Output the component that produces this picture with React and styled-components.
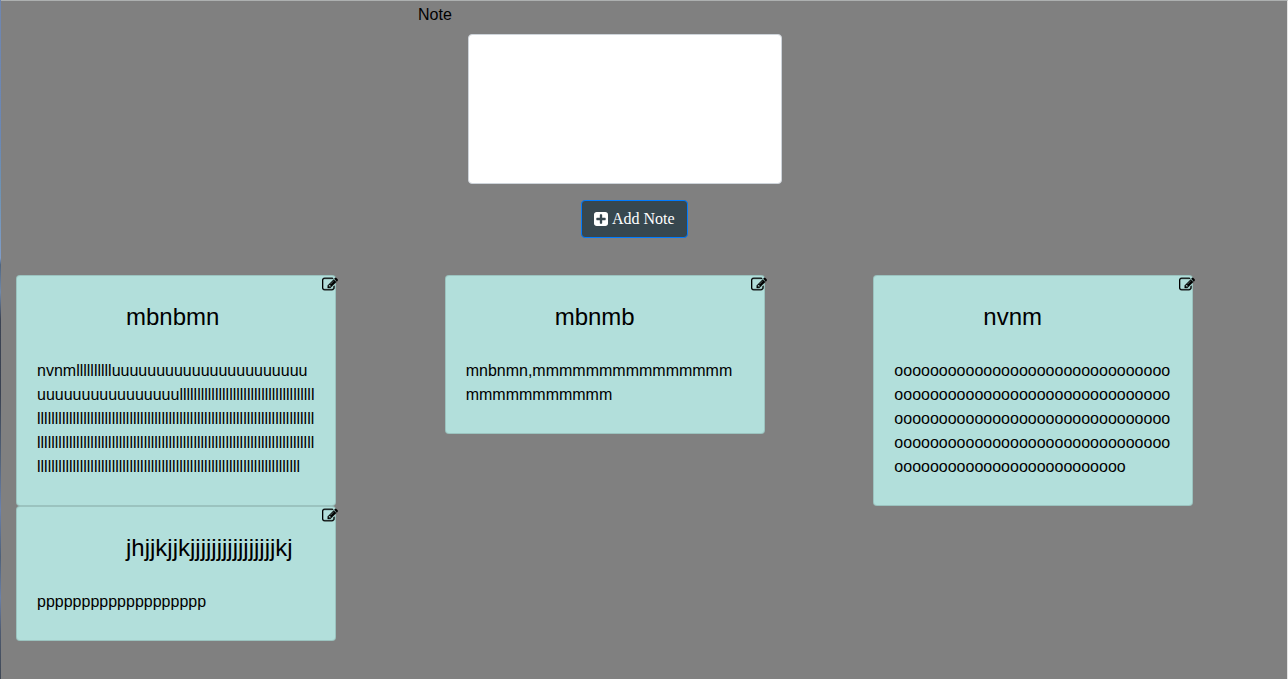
import React, { useState } from 'react';
import styled, { createGlobalStyle } from 'styled-components';

const GlobalStyle = createGlobalStyle`
  *, *::before, *::after { box-sizing: border-box; }
  body {
    margin: 0;
    background: #808080;
    color: #000;
    font: 16px/24px "Liberation Sans", Arial, sans-serif;
  }
`;

const Page = styled.div`
  display: grid;
  grid-template-columns: 1px minmax(0, 1fr);
  min-height: 100vh;
`;

const EdgeStrip = styled.div`
  background: linear-gradient(
    #6f86b0 0%, #6a87b5 20%, #6d93b4 28%, #7f9cc8 38%,
    #4f6580 39%, #7089ab 43%, #3c4454 47%, #3a4252 58%,
    #53647c 68%, #6a81ad 75%, #4e6078 82%, #6a80a8 88%,
    #4e5a70 93%, #3f4855 100%
  );
`;

const Main = styled.main`
  border-top: 1px solid #adb0b0;
  border-right: 1px solid #e4e4e4;
`;

const NoteForm = styled.form`
  display: flex;
  flex-direction: column;
  align-items: flex-start;
  margin-left: 417px;
  padding-top: 2px;
`;

const Label = styled.label`
  margin-bottom: 7px;
`;

const NoteInput = styled.textarea`
  display: block;
  width: 314px;
  height: 150px;
  margin: 0 0 16px 50px;
  padding: 6px 12px;
  border: 1px solid #ced4da;
  border-radius: 4px;
  background: #fff;
  color: #495057;
  font: inherit;
  resize: none;
`;

const AddButton = styled.button`
  display: flex;
  align-items: center;
  gap: 4px;
  margin-left: 163px;
  padding: 6px 12px;
  border: 1px solid #007bff;
  border-radius: 4px;
  background: #37474f;
  color: #fff;
  font: 16px/24px "Liberation Serif", "Times New Roman", serif;
  cursor: pointer;
`;

const Board = styled.section`
  display: grid;
  grid-template-columns: repeat(3, minmax(0, 1fr));
  align-items: start;
  margin-top: 37px;
  padding-bottom: 38px;
`;

const Cell = styled.div`
  padding: 0 15px;
`;

const Card = styled.article`
  position: relative;
  width: 320px;
  max-width: 100%;
  padding: 27px 20px 26px;
  border: 1px solid rgba(0, 0, 0, 0.125);
  border-radius: 4px;
  background: #b2dfdb;
  background-clip: border-box;
`;

const Title = styled.h4`
  margin: 0 0 28px;
  padding-left: 89px;
  font-size: 24px;
  font-weight: 400;
  line-height: 28px;
  white-space: nowrap;
`;

const Text = styled.p`
  margin: 0;
  overflow-wrap: anywhere;
`;

const EditButton = styled.button`
  position: absolute;
  top: 0;
  right: -3px;
  display: flex;
  padding: 0;
  border: 0;
  background: none;
  color: inherit;
  cursor: pointer;
`;

const Icon = styled.svg`
  display: block;
  width: ${({ $width }) => $width}px;
  height: 16px;
  fill: currentColor;
`;

const PlusSquare = () => (
  <Icon $width={14} viewBox="128 128 1536 1536" aria-hidden="true">
    <path d="M1408 960v-128q0-26-19-45t-45-19h-320v-320q0-26-19-45t-45-19h-128q-26 0-45 19t-19 45v320h-320q-26 0-45 19t-19 45v128q0 26 19 45t45 19h320v320q0 26 19 45t45 19h128q26 0 45-19t19-45v-320h320q26 0 45-19t19-45zm256-544v960q0 119-84.500 203.500t-203.500 84.500h-960q-119 0-203.500-84.500t-84.500-203.500v-960q0-119 84.500-203.500t203.500-84.500h960q119 0 203.500 84.500t84.500 203.500z" />
  </Icon>
);

const PencilSquare = () => (
  <Icon $width={16} viewBox="0 -64 1792 1792" stroke="currentColor" strokeWidth="36" aria-hidden="true">
    <path d="M888 1184l116-116-152-152-116 116v56h96v96h56zm440-720q-16-16-33 1l-350 350q-17 17-1 33t33-1l350-350q17-17 1-33zm80 594v190q0 119-84.500 203.500t-203.500 84.500h-832q-119 0-203.500-84.500t-84.500-203.500v-832q0-119 84.500-203.500t203.500-84.500h832q63 0 117 25 15 7 18 23 3 17-9 29l-49 49q-14 14-32 8-23-6-45-6h-832q-66 0-113 47t-47 113v832q0 66 47 113t113 47h832q66 0 113-47t47-113v-126q0-13 9-22l64-64q15-15 35-7t20 29zm-96-738l288 288-672 672h-288v-288zm444 132l-92 92-288-288 92-92q28-28 68-28t68 28l152 152q28 28 28 68t-28 68z" />
  </Icon>
);

const notes = [
  { title: 'mbnbmn', text: 'nvnm' + 'l'.repeat(10) + 'u'.repeat(38) + 'l'.repeat(268) },
  { title: 'mbnmb', text: 'mnbnmn,' + 'm'.repeat(26) },
  { title: 'nvnm', text: 'o'.repeat(150) },
  { title: 'jhjjkjjk' + 'j'.repeat(16) + 'kj', text: 'p'.repeat(19) },
];

export default function App() {
  const [draft, setDraft] = useState('');
  return (
    <>
      <GlobalStyle />
      <Page>
        <EdgeStrip />
        <Main>
          <NoteForm onSubmit={(e) => e.preventDefault()}>
            <Label htmlFor="note">Note</Label>
            <NoteInput id="note" value={draft} onChange={(e) => setDraft(e.target.value)} />
            <AddButton type="submit">
              <PlusSquare />
              Add Note
            </AddButton>
          </NoteForm>
          <Board>
            {notes.map((note) => (
              <Cell key={note.title}>
                <Card>
                  <EditButton type="button" aria-label={`Edit ${note.title}`}>
                    <PencilSquare />
                  </EditButton>
                  <Title>{note.title}</Title>
                  <Text>{note.text}</Text>
                </Card>
              </Cell>
            ))}
          </Board>
        </Main>
      </Page>
    </>
  );
}
